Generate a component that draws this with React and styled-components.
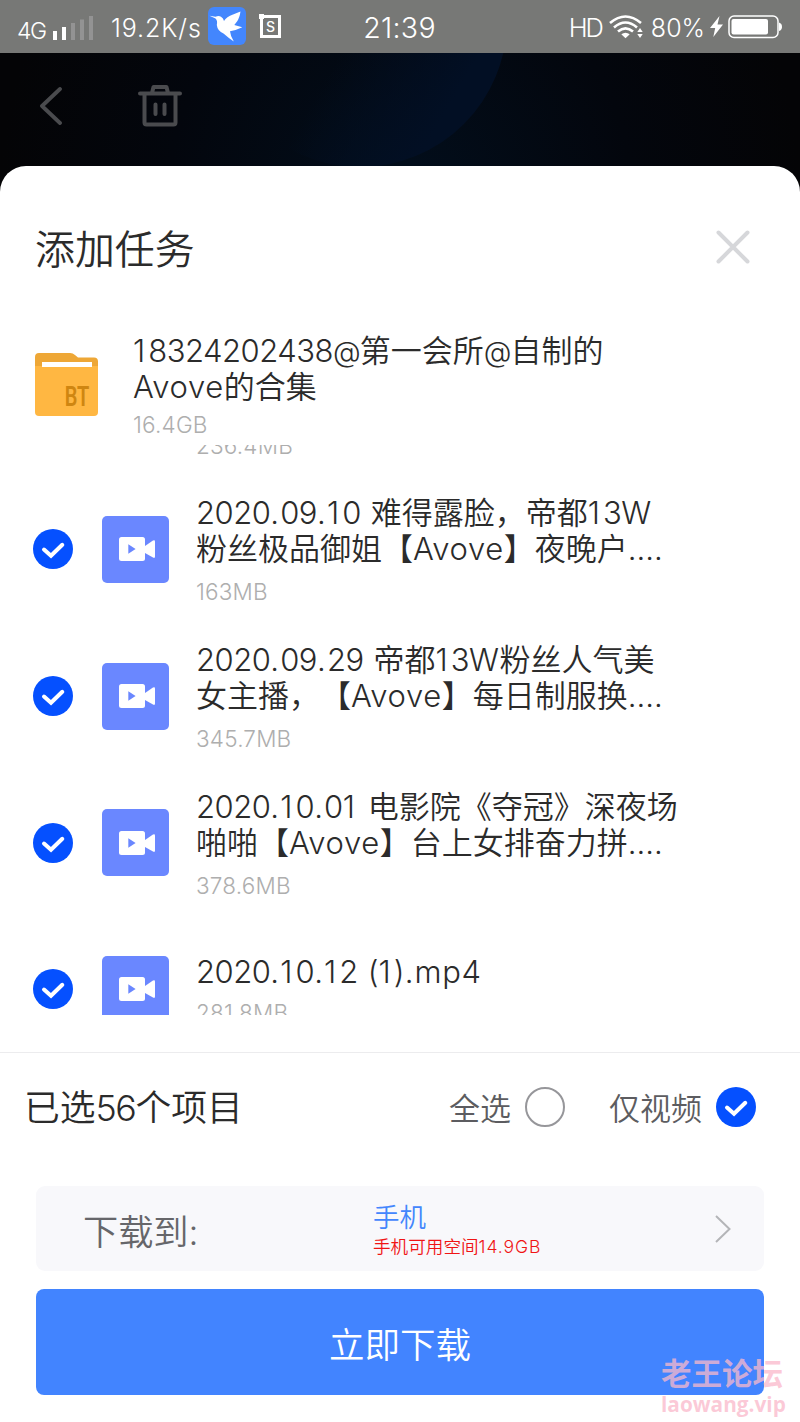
import React from "react";
import styled, { createGlobalStyle } from "styled-components";

const files = [
	{ lines: [], size: "236.4MB" },
	{
		lines: ["2020.09.10 难得露脸，帝都13W", "粉丝极品御姐【Avove】夜晚户...."],
		size: "163MB",
	},
	{
		lines: ["2020.09.29 帝都13W粉丝人气美", "女主播，【Avove】每日制服换...."],
		size: "345.7MB",
	},
	{
		lines: ["2020.10.01 电影院《夺冠》深夜场", "啪啪【Avove】台上女排奋力拼...."],
		size: "378.6MB",
	},
	{ lines: ["2020.10.12 (1).mp4"], size: "281.8MB" },
];

// latin runs get their own tracking, CJK glyphs keep theirs
const Mixed = ({ text }) =>
	text
		.split(/(1|[02-9]+|[A-Za-z]+|@|\.{2,}|[. ])/)
		.filter(Boolean)
		.map((part, i) => {
			if (part === "1") return <One key={i}>{part}</One>;
			if (/^\d/.test(part)) return <Digits key={i}>{part}</Digits>;
			if (/^[A-Za-z]/.test(part)) return <Word key={i}>{part}</Word>;
			if (part === "@") return <At key={i}>{part}</At>;
			if (part === "." || part === " ") return <Dot key={i}>{part}</Dot>;
			return part;
		});

const Check = () => (
	<Svg width="40" height="40" viewBox="0 0 40 40">
		<circle cx="20" cy="20" r="20" fill="#0550ff" />
		<path
			d="M11 20.500l7 6.300L29.300 15.800"
			fill="none"
			stroke="#fff"
			strokeWidth="4"
			strokeLinecap="round"
		/>
	</Svg>
);

const VideoIcon = () => (
	<Svg width="36" height="24" viewBox="0 0 36 24">
		<rect width="26" height="24" rx="2.5" fill="#fff" />
		<path d="M26 9l8-5.400q2-1 2 1v15q0 2-2 1L26 16z" fill="#fff" />
		<path d="M9.300 7.300l7.300 4.700-7.300 4.700z" fill="#6a87ff" />
	</Svg>
);

const StatusBar = () => (
	<Status>
		<StatusSide>
			<Network>4G</Network>
			<Signal width="40" height="24" viewBox="0 0 40 24">
				<path d="M0 15h4v9H0zM9 11h4v13H9z" fill="#fff" />
				<path d="M18 7h4v17h-4zM27 3.500h4V24h-4zM36 0h4v24h-4z" fill="#939393" />
			</Signal>
			<Speed>19.2K/s</Speed>
			<AppIcon width="38" height="38" viewBox="0 0 38 38">
				<rect width="38" height="38" rx="6" fill="#4386fd" />
				<path
					d="M1.500 8.700L7.500 9.800Q10.500 8.500 13 9.700Q15.400 11 16 14Q18.500 9.500 25 7.500L32.500 4.500Q31.500 11 29 14.500L26.300 18L34.300 20.300Q29 23 22 24.300Q22.500 29.500 25.800 34.500Q20 30.500 15.500 26.500Q9.500 24 8.800 18Q9.800 13.500 7.500 11.500Z"
					fill="#fff"
				/>
			</AppIcon>
			<SBadge>
				<i />
				S
			</SBadge>
		</StatusSide>
		<Clock>21:39</Clock>
		<StatusSide>
			<Hd>HD</Hd>
			<Svg width="34" height="24" viewBox="0 0 34 24">
				<g fill="none" stroke="#fff" strokeWidth="2.600">
					<path d="M1 8Q16.500-5 32 8" />
					<path d="M5 12.500Q16.500 2.500 28 12.500" />
					<path d="M9 16.600Q16.500 10 24 16.600" />
				</g>
				<path d="M16.500 23.300L12.300 19.300Q16.500 16 20.700 19.300Z" fill="#fff" />
				<path d="M31 13l2.700 4h-5.400zM31 23l2.700-4h-5.400z" fill="#fff" />
			</Svg>
			<Percent>80%</Percent>
			<Bolt width="13" height="21" viewBox="0 0 13 21">
				<path d="M9.500 0L0 12h5.200L3.300 21 13 8.500H7.500z" fill="#fff" />
			</Bolt>
			<Svg width="54" height="24" viewBox="0 0 54 24">
				<rect
					x="1"
					y="1"
					width="49"
					height="21.500"
					rx="5"
					fill="none"
					stroke="#fff"
					strokeWidth="1.500"
				/>
				<rect x="3.500" y="4" width="36.500" height="15.500" rx="2" fill="#fff" />
				<path d="M51 7.500q3 1 3 4.300t-3 4.300z" fill="#fff" />
			</Svg>
		</StatusSide>
	</Status>
);

export default function App() {
	return (
		<Screen>
			<GlobalStyle />
			<StatusBar />
			<Toolbar>
				<Svg width="22" height="38" viewBox="0 0 22 38">
					<path
						d="M20 2L2 19l18 17"
						fill="none"
						stroke="#4a4b4e"
						strokeWidth="3.800"
						strokeLinecap="round"
						strokeLinejoin="round"
					/>
				</Svg>
				<Svg width="44" height="44" viewBox="0 0 44 44">
					<g
						fill="none"
						stroke="#4a4b4e"
						strokeWidth="4"
						strokeLinecap="round"
						strokeLinejoin="round"
					>
						<path d="M2 9.500h40M6.500 10v28.500q0 2 2 2h27q2 0 2-2V10M14 9l1.500-6h13L30 9" />
						<path d="M17.500 20.500v9.500M26.500 20.500v9.500" />
					</g>
				</Svg>
			</Toolbar>
			<Sheet>
				<SheetHeader>
					<Title>添加任务</Title>
					<Svg width="34" height="34" viewBox="0 0 34 34">
						<path
							d="M2.500 2.500l29 29M31.500 2.500l-29 29"
							stroke="#d6d7da"
							strokeWidth="4"
							strokeLinecap="round"
						/>
					</Svg>
				</SheetHeader>
				<Torrent>
					<Folder>
						<Svg width="63" height="63" viewBox="0 0 63 63">
							<path
								d="M0 4q0-4 4-4h31q3 0 5 2l3 2.500h16q4 0 4 4V20H0z"
								fill="#eea736"
							/>
							<path d="M0 13h63v46q0 4-4 4H4q-4 0-4-4z" fill="#ffb742" />
							<path d="M7 9h50v5H7z" fill="#fff" />
						</Svg>
						<FolderTag>BT</FolderTag>
					</Folder>
					<Info>
						<Name>
							<div>
								<Mixed text="18324202438@第一会所@自制的" />
							</div>
							<div>
								<Mixed text="Avove的合集" />
							</div>
						</Name>
						<Size>16.4GB</Size>
					</Info>
				</Torrent>
				<List>
					{files.map((file) => (
						<Row key={file.size}>
							<Check />
							<Thumb>
								<VideoIcon />
							</Thumb>
							<RowInfo>
								<Name $lines={file.lines.length || 2}>
									{file.lines.map((line) => (
										<div key={line}>
											<Mixed text={line} />
										</div>
									))}
								</Name>
								<Size $gap={file.lines.length === 1 ? 10 : 12}>{file.size}</Size>
							</RowInfo>
						</Row>
					))}
				</List>
				<Summary>
					<Count>
						已选<Tight>56</Tight>个项目
					</Count>
					<Option>
						全选
						<Circle />
					</Option>
					<Option>
						仅视频
						<Check />
					</Option>
				</Summary>
				<Target>
					<TargetLabel>下载到:</TargetLabel>
					<TargetInfo>
						<Device>手机</Device>
						<Space>
							手机可用空间<Free>14.9GB</Free>
						</Space>
					</TargetInfo>
					<Svg width="16" height="28" viewBox="0 0 16 28">
						<path
							d="M1 1l13.500 13L1 27"
							fill="none"
							stroke="#b4b5b8"
							strokeWidth="2"
						/>
					</Svg>
				</Target>
				<Download>立即下载</Download>
			</Sheet>
			<Watermark>
				<WatermarkName>老王论坛</WatermarkName>
				<WatermarkUrl>laowang.vip</WatermarkUrl>
			</Watermark>
		</Screen>
	);
}

const GlobalStyle = createGlobalStyle`
	* {
		box-sizing: border-box;
	}
	body {
		margin: 0;
		background: #fff;
		font-family: Inter, "Noto Sans CJK SC", sans-serif;
		font-weight: 350;
		text-spacing-trim: space-all;
	}
`;

const Screen = styled.div`
	position: relative;
	width: 800px;
	height: 1422px;
	display: flex;
	flex-direction: column;
	overflow: hidden;
	background: radial-gradient(circle at 400px 190px, #020e1c 0, #03060d 230px, #040406 400px);
`;

const Svg = styled.svg`
	display: block;
	flex: none;
`;

const Status = styled.div`
	position: relative;
	z-index: 1;
	display: grid;
	grid-template-columns: 1fr auto 1fr;
	align-items: center;
	height: 53px;
	flex: none;
	padding: 0 18px 0 17px;
	background: #777876;
	color: #fff;
	font-weight: 400;
	line-height: 1;
`;

const StatusSide = styled.div`
	display: flex;
	align-items: center;
	&:last-child {
		justify-content: flex-end;
	}
`;

const Network = styled.span`
	font-size: 23px;
	font-weight: 350;
	letter-spacing: -1.5px;
	width: 36px;
	padding-top: 9px;
`;

const Signal = styled(Svg)`
	margin-top: 2px;
`;

const Speed = styled.span`
	width: 97px;
	padding: 3px 0 0 18px;
	margin-right: 18px;
	font-size: 25px;
	font-weight: 350;
	letter-spacing: 0.9px;
	white-space: nowrap;
`;

const AppIcon = styled(Svg)`
	margin-bottom: 2px;
`;

const SBadge = styled.span`
	position: relative;
	display: flex;
	align-items: center;
	justify-content: center;
	width: 21px;
	height: 23px;
	margin-left: 14px;
	border: 3px solid #fff;
	font-size: 14px;
	font-weight: 500;
	i {
		position: absolute;
		left: -4px;
		top: -4px;
		width: 5px;
		height: 5px;
		background: #fff;
	}
`;

const Clock = styled.span`
	font-size: 28.500px;
	font-weight: 350;
	letter-spacing: 0.3px;
	padding-top: 3px;
`;

const Hd = styled.span`
	font-size: 25.500px;
	font-weight: 300;
	letter-spacing: -2px;
	margin-right: 7px;
	padding-top: 3px;
`;

const Percent = styled.span`
	font-size: 25px;
	font-weight: 350;
	margin: 0 5px 0 8px;
	padding-top: 3px;
`;

const Bolt = styled(Svg)`
	margin-right: 5px;
`;

const Toolbar = styled.div`
	position: relative;
	display: flex;
	align-items: center;
	gap: 76px;
	height: 113px;
	flex: none;
	padding: 0 0 7px 40px;
	overflow: hidden;
	&::before {
		content: "";
		position: absolute;
		left: 213px;
		top: -180px;
		width: 294px;
		height: 294px;
		border-radius: 50%;
		background: linear-gradient(120deg, transparent 50%, #020f24 80%);
	}
`;

const Sheet = styled.div`
	position: relative;
	display: flex;
	flex-direction: column;
	flex: 1;
	border-radius: 26px 26px 0 0;
	background: #fff;
`;

const SheetHeader = styled.div`
	display: flex;
	align-items: center;
	justify-content: space-between;
	height: 161px;
	flex: none;
	padding: 0 50px 0 35px;
`;

const Title = styled.h1`
	margin: 0;
	padding-top: 7px;
	font-size: 39.900px;
	font-weight: 350;
	line-height: 48px;
	color: #2b2b2b;
`;

const Torrent = styled.div`
	display: flex;
	height: 118px;
	flex: none;
	padding: 6px 0 0 35px;
	gap: 35px;
`;

const Folder = styled.div`
	position: relative;
	width: 63px;
	padding-top: 20px;
`;

const FolderTag = styled.span`
	position: absolute;
	right: 9px;
	top: 50px;
	font-family: Roboto, sans-serif;
	font-size: 27px;
	font-weight: 600;
	line-height: 28px;
	color: #cf8611;
	transform: scaleX(0.74);
	transform-origin: right;
`;

const Info = styled.div`
	display: flex;
	flex-direction: column;
	white-space: nowrap;
`;

const RowInfo = styled(Info)`
	padding-top: 2px;
`;

const Name = styled.div`
	min-height: ${(props) => (props.$lines || 1) * 36}px;
	font-size: 31px;
	line-height: 36px;
	color: #2b2b2b;
	div {
		height: 36px;
	}
`;

const Digits = styled.span`
	letter-spacing: -0.5px;
`;

const One = styled.span`
	letter-spacing: 3.1px;
`;

const Word = styled.span`
	letter-spacing: 0.6px;
`;

const At = styled.span`
	font-size: 28.500px;
	letter-spacing: -1px;
`;

const Dot = styled.span`
	letter-spacing: 1.1px;
`;

const Size = styled.div`
	margin-top: ${(props) => props.$gap || 7}px;
	font-size: 22.500px;
	font-weight: 300;
	line-height: 26px;
	letter-spacing: 0.2px;
	color: #aeaeae;
`;

const List = styled.div`
	height: 570px;
	flex: none;
	overflow: hidden;
`;

const Row = styled.div`
	display: flex;
	align-items: center;
	height: 146.67px;
	padding-left: 33px;
	/* list is scrolled past most of its first row */
	&:first-child {
		margin-top: -115.600px;
	}
`;

const Thumb = styled.div`
	display: flex;
	align-items: center;
	justify-content: center;
	width: 67px;
	height: 67px;
	margin: 0 27px 0 29px;
	padding-left: 3px;
	border-radius: 5px;
	background: #6a87ff;
`;

const Summary = styled.div`
	display: flex;
	align-items: center;
	height: 108px;
	flex: none;
	margin-top: 37px;
	padding: 0 44px 0 24px;
	border-top: 1px solid #ececee;
`;

const Count = styled.div`
	margin-right: auto;
	padding-top: 3px;
	font-size: 35.800px;
	line-height: 44px;
	color: #2b2b2b;
`;

const Tight = styled.span`
	letter-spacing: -1.5px;
`;

const Option = styled.label`
	display: flex;
	align-items: center;
	gap: 14px;
	margin-left: 44px;
	font-size: 31px;
	color: #5c5c60;
`;

const Circle = styled.span`
	width: 40px;
	height: 40px;
	border: 2px solid #96969a;
	border-radius: 50%;
`;

const Target = styled.div`
	display: flex;
	align-items: center;
	height: 85px;
	flex: none;
	margin: 26px 36px 18px;
	padding: 0 33px 0 47px;
	border-radius: 9px;
	background: #f8f8fb;
`;

const TargetLabel = styled.div`
	width: 290px;
	padding-top: 2px;
	font-size: 35.200px;
	color: #66666a;
`;

const TargetInfo = styled.div`
	flex: 1;
	padding-top: 4px;
	white-space: nowrap;
`;

const Device = styled.div`
	font-size: 26.500px;
	line-height: 32px;
	color: #4386fd;
`;

const Space = styled.div`
	font-size: 17.600px;
	line-height: 28px;
	color: #f01414;
`;

const Free = styled.span`
	letter-spacing: 0.9px;
`;

const Download = styled.button`
	height: 106px;
	margin: 0 36px;
	border: none;
	border-radius: 8px;
	background: #4284ff;
	color: #fff;
	font-family: inherit;
	font-size: 35.500px;
	font-weight: 350;
`;

const Watermark = styled.div`
	position: absolute;
	left: 661px;
	top: 1355px;
	color: rgba(250, 184, 202, 0.75);
	font-weight: 700;
	white-space: nowrap;
`;

const WatermarkName = styled.div`
	font-size: 30.500px;
	line-height: 38px;
`;

const WatermarkUrl = styled.div`
	font-family: "Open Sans", sans-serif;
	font-size: 20.800px;
	line-height: 22px;
`;
